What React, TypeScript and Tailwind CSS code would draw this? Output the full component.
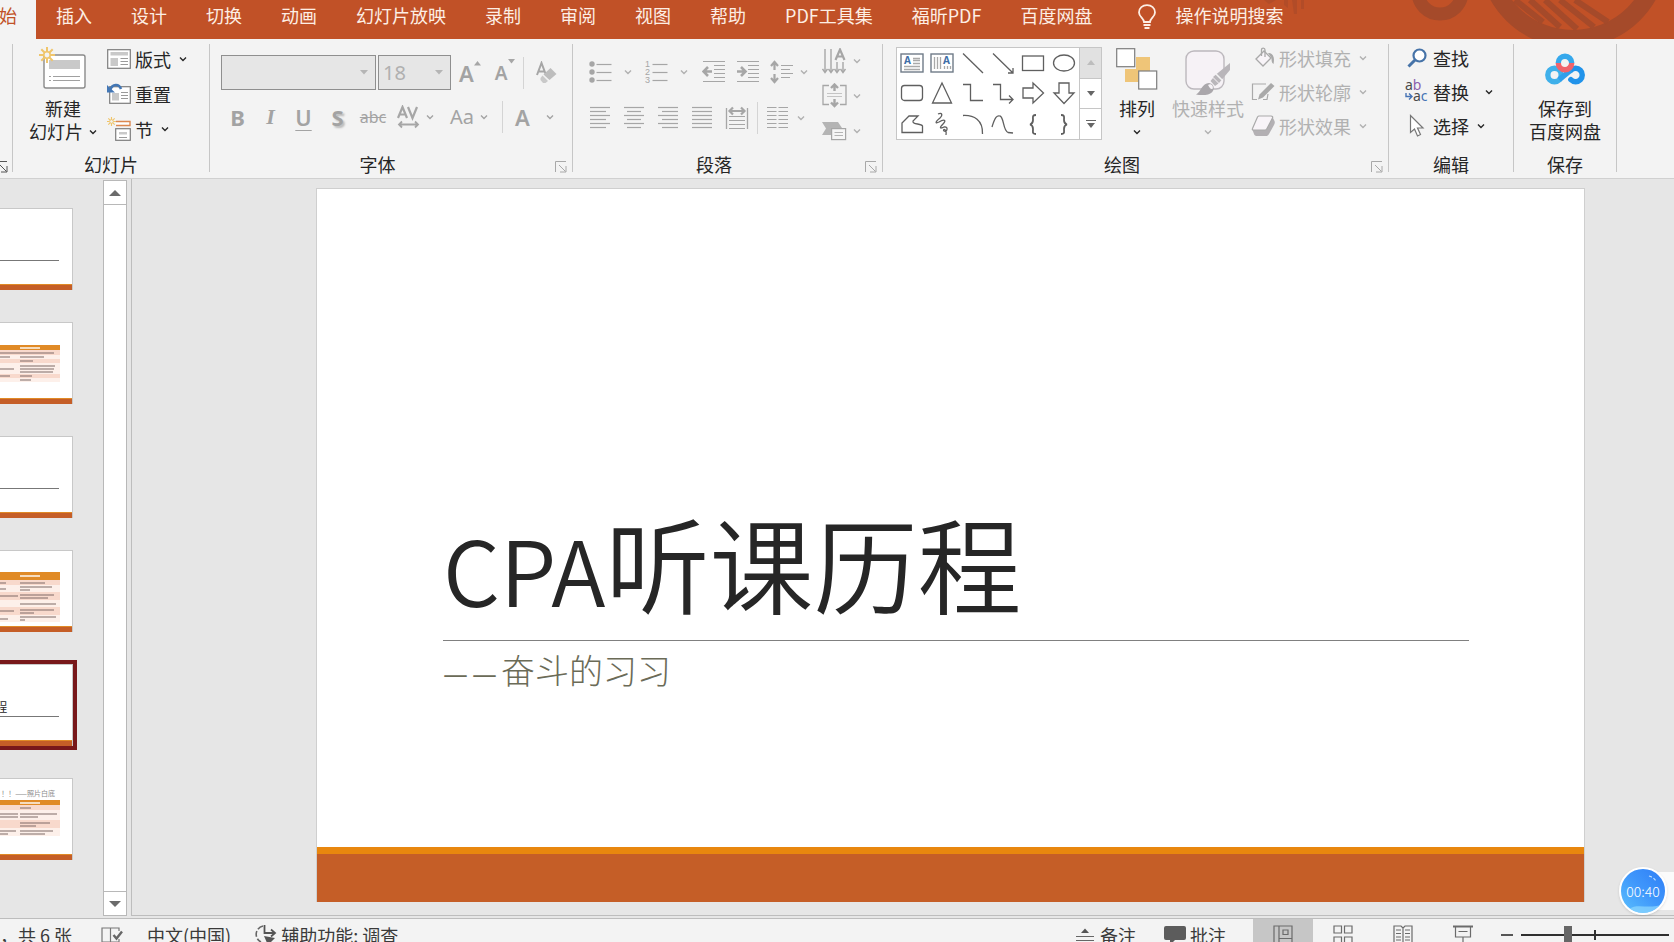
import type { ReactNode } from "react";
import clsx from "clsx";

const TABS = ["插入", "设计", "切换", "动画", "幻灯片放映", "录制", "审阅", "视图", "帮助", "PDF工具集", "福昕PDF", "百度网盘"];

type IconProps = { w: number; h: number; className?: string; children: ReactNode };

function Svg({ w, h, className, children }: IconProps) {
  return (
    <svg width={w} height={h} viewBox={`0 0 ${w} ${h}`} fill="none" aria-hidden="true" className={clsx("shrink-0", className)}>
      {children}
    </svg>
  );
}

function Chevron({ className }: { className?: string }) {
  return (
    <Svg w={8} h={6} className={className}>
      <path d="M1 1.5 L4 4.5 L7 1.5" stroke="currentColor" strokeWidth="1.4" />
    </Svg>
  );
}

function Divider({ className }: { className?: string }) {
  return <div className={clsx("w-px h-8 bg-[#d4d4d4] shrink-0", className)} />;
}

/* ---------- ribbon building blocks ---------- */

type GroupProps = { label: string; width: string; launcher?: boolean; children: ReactNode };

function Group({ label, width, launcher, children }: GroupProps) {
  return (
    <section aria-label={label} className={clsx("flex shrink-0", width)}>
      <div className="flex flex-col flex-1 min-w-0">
        <div className="flex h-[108px]">{children}</div>
        <div className="flex items-center h-[26px] pb-[3px]">
          <span className="flex-1 text-center">{label}</span>
          {launcher && (
            <button aria-label={`${label}设置`} className="w-[27px] pt-1.5 pl-2.5 text-[#a8a8a8]">
              <Launcher />
            </button>
          )}
        </div>
      </div>
      <div className="w-px h-32 bg-[#c6c6c6]" />
    </section>
  );
}

function Launcher() {
  return (
    <Svg w={12} h={12}>
      <path d="M0.5 11 V0.5 H11 M4 4 L10.5 10.5 M11 5 V11 H5" stroke="currentColor" />
    </Svg>
  );
}

type BigProps = { icon: ReactNode; lines: string[]; arrow?: "inline" | "below"; disabled?: boolean; className?: string };

function BigButton({ icon, lines, arrow, disabled, className }: BigProps) {
  return (
    <button disabled={disabled} className={clsx("flex flex-col items-center pt-0.5 shrink-0 leading-[23px] whitespace-nowrap", disabled && "text-[#b1b1b1]", className)}>
      <span className="flex items-center justify-center h-[46px] mb-[5px]">{icon}</span>
      {lines.map((line, i) => (
        <span key={line} className="flex items-center gap-1.5">
          {line}
          {arrow === "inline" && i === lines.length - 1 && <Chevron />}
        </span>
      ))}
      {arrow === "below" && <Chevron className="mt-[9px]" />}
    </button>
  );
}

type SmallProps = { icon: ReactNode; label: string; arrow?: string; disabled?: boolean; height: string };

function SmallButton({ icon, label, arrow, disabled, height }: SmallProps) {
  return (
    <button disabled={disabled} className={clsx("flex items-center whitespace-nowrap", height, disabled && "text-[#b1b1b1]")}>
      <span className="w-6 mr-1 flex justify-center">{icon}</span>
      {label}
      {arrow && <Chevron className={arrow} />}
    </button>
  );
}

/* ---------- slides group icons ---------- */

function Sun({ s = 1 }: { s?: number }) {
  return (
    <g transform={`scale(${s})`}>
      <path d="M8 0 V16 M0 8 H16 M2.3 2.3 L13.7 13.7 M13.7 2.3 L2.3 13.7" stroke="#efc56c" strokeWidth="2" />
      <circle cx="8" cy="8" r="3.2" fill="#f3f3f3" stroke="#efc56c" strokeWidth="1.6" />
    </g>
  );
}

function NewSlideIcon() {
  return (
    <Svg w={48} h={44}>
      <rect x="5" y="8" width="41" height="33" rx="2" fill="#fff" stroke="#8a8a8a" strokeWidth="1.4" />
      <rect x="10" y="13" width="31" height="9" fill="#c9c9c9" />
      <path d="M14 29.5 H41 M14 33.5 H41" stroke="#a0a0a0" />
      <path d="M10 29.5 H12 M10 33.5 H12" stroke="#a0a0a0" />
      <Sun />
    </Svg>
  );
}

function LayoutIcon() {
  return (
    <Svg w={24} h={20}>
      <rect x="0.7" y="0.7" width="22.6" height="18.6" fill="#fff" stroke="#7d7d7d" strokeWidth="1.2" />
      <rect x="3.5" y="3" width="17.5" height="3.5" fill="#c9c9c9" />
      <rect x="3.5" y="9" width="7.5" height="8" fill="#c9c9c9" />
      <path d="M13.5 9.5 H21 M13.5 12.5 H21 M13.5 15.5 H21" stroke="#9a9a9a" />
    </Svg>
  );
}

function ResetIcon() {
  return (
    <Svg w={24} h={22}>
      <rect x="2.7" y="3.7" width="20.6" height="16.6" fill="#fff" stroke="#7d7d7d" strokeWidth="1.2" />
      <rect x="5" y="10" width="7" height="7.5" fill="#c9c9c9" />
      <path d="M14 9.5 H21 M14 12.5 H21 M14 15.5 H21" stroke="#9a9a9a" />
      <path d="M14 6 C12 0.5 5.5 0.5 3 7" stroke="#4377b5" strokeWidth="2.6" />
      <path d="M0 2 V9.5 H8 Z" fill="#4377b5" />
    </Svg>
  );
}

function SectionIcon() {
  return (
    <Svg w={24} h={24}>
      <path d="M9 4.5 H23 V8.5 H9" stroke="#dc8850" strokeWidth="1.4" fill="#fff" />
      <rect x="8.7" y="11.7" width="14.6" height="11.6" fill="#fff" stroke="#7d7d7d" strokeWidth="1.2" />
      <rect x="12" y="15" width="8" height="2.5" fill="#c9c9c9" />
      <path d="M12 20.5 H20" stroke="#9a9a9a" />
      <Sun s={0.56} />
    </Svg>
  );
}

/* ---------- paragraph icons, all drawn on a 24px box ---------- */

const G = "#a6a6a6";

function Bullets() {
  return (
    <Svg w={24} h={24}>
      {[4, 12, 20].map((y) => (
        <g key={y}>
          <circle cx="3" cy={y} r="2.7" fill={G} />
          <path d={`M7.5 ${y + 0.5} H22.5`} stroke={G} strokeWidth="1.2" />
        </g>
      ))}
    </Svg>
  );
}

function Numbering() {
  return (
    <Svg w={24} h={24} className="overflow-visible">
      {[1, 2, 3].map((n) => (
        <g key={n}>
          <text x="0" y={n * 8 - 1} fontSize="9" fill={G} fontFamily="Liberation Sans">{n}</text>
          <path d={`M7.5 ${n * 8 - 3.5} H22.5`} stroke={G} strokeWidth="1.2" />
        </g>
      ))}
    </Svg>
  );
}

function Indent({ right }: { right?: boolean }) {
  return (
    <Svg w={24} h={24}>
      <path d="M1 1.5 H23 M12 5.5 H23 M12 9.5 H23 M12 13.5 H23 M12 17.5 H23 M1 21.5 H23" stroke={G} strokeWidth="1.2" />
      {right ? (
        <path d="M1 11.5 H8 M5 7 L9.5 11.5 L5 16" stroke={G} strokeWidth="2.6" />
      ) : (
        <path d="M10 11.5 H3 M6 7 L1.5 11.5 L6 16" stroke={G} strokeWidth="2.6" />
      )}
    </Svg>
  );
}

function LineSpacing() {
  return (
    <Svg w={24} h={24}>
      <path d="M4.5 2 V10 M1 6 L4.5 2 L8 6 M4.5 14 V22 M1 18 L4.5 22 L8 18" stroke={G} strokeWidth="2.2" />
      <path d="M11 5.5 H23 M11 9.5 H20 M11 13.5 H23 M11 17.5 H20" stroke={G} strokeWidth="1.2" />
    </Svg>
  );
}

function TextDirection() {
  return (
    <Svg w={25} h={26}>
      <path d="M3 1 V23 M9 1 V23 M15 14 V23 M21 14 V23" stroke={G} strokeWidth="1.4" />
      <path d="M0.5 21 L3 24.5 L5.5 21 M6.5 21 L9 24.5 L11.5 21 M12.5 21 L15 24.5 L17.5 21 M18.5 21 L21 24.5 L23.5 21" stroke={G} strokeWidth="1.4" />
      <path d="M13.5 12 L18 1.5 L22.5 12 M15 8.5 H21" stroke={G} strokeWidth="2.2" />
    </Svg>
  );
}

function AlignText() {
  return (
    <Svg w={25} h={25}>
      <path d="M7 2.5 H1 V21.5 H7 M18 2.5 H24 V21.5 H18" stroke={G} strokeWidth="1.3" />
      <path d="M5 10.5 H20 M5 13.5 H20" stroke="#c4c4c4" />
      <path d="M12.5 8 V1.5 M9 5 L12.5 1.5 L16 5 M12.5 16 V23 M9 19.5 L12.5 23 L16 19.5" stroke={G} strokeWidth="2.4" />
    </Svg>
  );
}

function SmartArt() {
  return (
    <Svg w={25} h={20}>
      <path d="M0 1 H16 L20 7 H9 V14 H0 L4 7.5 Z" fill="#b4b4b4" />
      <rect x="9.6" y="7.6" width="14" height="11" fill="#f6f6f6" stroke={G} strokeWidth="1.2" />
      <path d="M12.5 11.5 H21 M12.5 14.5 H21" stroke="#b4b4b4" />
    </Svg>
  );
}

const ALIGNMENTS = [
  { label: "左对齐", short: [1, 17] },
  { label: "居中", short: [4, 18] },
  { label: "右对齐", short: [5, 21] },
  { label: "两端对齐", short: [1, 21] },
];

function AlignIcon({ short }: { short: number[] }) {
  return (
    <Svg w={22} h={24}>
      {[1, 5, 9, 13, 17, 21].map((y, i) => (
        <path key={y} d={i % 2 ? `M${short[0]} ${y + 0.5} H${short[1]}` : `M1 ${y + 0.5} H21`} stroke={G} strokeWidth="1.2" />
      ))}
    </Svg>
  );
}

function Distribute() {
  return (
    <Svg w={24} h={24}>
      <path d="M1.5 2 V23 M22.5 2 V23" stroke={G} strokeWidth="1.3" />
      <path d="M4 10.5 H20 M4 14.5 H20 M4 18.5 H20 M4 22.5 H20" stroke={G} strokeWidth="1.2" />
      <path d="M5 5 H19 M8 1.5 L4.5 5 L8 8.5 M16 1.5 L19.5 5 L16 8.5" stroke={G} strokeWidth="2.2" />
    </Svg>
  );
}

function Columns() {
  return (
    <Svg w={23} h={24}>
      {[1, 5, 9, 13, 17, 21].map((y) => (
        <path key={y} d={`M1 ${y + 0.5} H10.5 M12.5 ${y + 0.5} H22`} stroke={G} strokeWidth="1.2" />
      ))}
    </Svg>
  );
}

/* ---------- drawing group ---------- */

const INK = "#5f5f5f";

const SHAPES: { name: string; art: ReactNode }[] = [
  {
    name: "文本框",
    art: (
      <>
        <rect x="1" y="3" width="22" height="18" stroke="#6f7b88" strokeWidth="1.4" />
        <text x="4" y="13" fontSize="10" fontWeight="700" fill="#3f6fa8" fontFamily="Noto Sans">A</text>
        <path d="M13 7.5 H20 M13 9.5 H20 M13 12.5 H20 M4 15.5 H20 M4 18.5 H20" stroke="#a9a9a9" />
      </>
    ),
  },
  {
    name: "竖排文本框",
    art: (
      <>
        <rect x="1" y="3" width="22" height="18" stroke="#6f7b88" strokeWidth="1.4" />
        <text x="13" y="13" fontSize="10" fontWeight="700" fill="#3f6fa8" fontFamily="Noto Sans">A</text>
        <path d="M4.5 6 V18 M7.5 6 V18 M10.5 6 V18 M14.5 15 V18 M17.5 15 V18 M20.5 15 V18" stroke="#a9a9a9" />
      </>
    ),
  },
  { name: "直线", art: <path d="M2 2.5 L22 22" /> },
  { name: "箭头", art: <path d="M2 2.5 L22 22 M22 17 V22 H17" /> },
  { name: "矩形", art: <rect x="1.5" y="5" width="21" height="14.5" /> },
  { name: "椭圆", art: <ellipse cx="12" cy="12" rx="10.5" ry="8" /> },
  { name: "圆角矩形", art: <rect x="1.5" y="4.5" width="21" height="15" rx="3" /> },
  { name: "三角形", art: <path d="M12 2 L21.5 22 H2.5 Z" /> },
  { name: "肘形连接符", art: <path d="M2 3.5 H9.5 V19.5 H22" /> },
  { name: "肘形箭头", art: <path d="M2 3.5 H9.5 V18.5 H22 M18 14.5 L22 18.5 L18 22.5" /> },
  { name: "右箭头", art: <path d="M2 7 H12 V2 L22.5 12 L12 22 V17 H2 Z" /> },
  { name: "下箭头", art: <path d="M7 2 V12 H2 L12 22.5 L22 12 H17 V2 Z" /> },
  { name: "任意多边形", art: <path d="M2 20.5 V11 L9 4 H18 L13 9 C12 13 21 11 22.5 14 V20.5 Z" /> },
  { name: "曲线", art: <path d="M8 2 C12 0 13 3 10 6 C5 10 5 12 9 10 C14 7 17 8 13 12 C9 16 10 17 14 15 C19 14 17 21 14 19 C12 17 17 16 16 23" /> },
  { name: "弧形", art: <path d="M2 3.5 C13 3 22 8 21.5 22" /> },
  { name: "波形", art: <path d="M1 15 C4 5 6 3 9 4 C13 5 12 19 17 20.5 L22 21" /> },
  { name: "左大括号", art: <path d="M15 3 C11 3 12 5 12 8 C12 11 11 12 9 12.5 C11 13 12 14 12 17 C12 20 11 22 15 22" strokeWidth="1.8" /> },
  { name: "右大括号", art: <path d="M9 3 C13 3 12 5 12 8 C12 11 13 12 15 12.5 C13 13 12 14 12 17 C12 20 13 22 9 22" strokeWidth="1.8" /> },
];

function ArrangeIcon() {
  return (
    <Svg w={42} h={42}>
      <rect x="20" y="9" width="14" height="14" fill="#efc578" />
      <rect x="9" y="21" width="14" height="13" fill="#efc578" />
      <rect x="0.7" y="0.7" width="18" height="18" fill="#fff" stroke="#7d7d7d" strokeWidth="1.2" />
      <rect x="22.7" y="23" width="18" height="18" fill="#fff" stroke="#7d7d7d" strokeWidth="1.2" />
    </Svg>
  );
}

function QuickStyleIcon() {
  return (
    <Svg w={46} h={46} className="mt-2">
      <rect x="1" y="1" width="38" height="38" rx="8" fill="#f6f2f6" stroke="#bcb8bd" strokeWidth="1.4" />
      <path d="M45 13 L45 20 L34 33 L28 27 Z" fill="#b9b6ba" />
      <path d="M31 24 L37 30" stroke="#f3f3f3" strokeWidth="1.6" />
      <path d="M28 28 L33.5 33.5 L30 36 L25.5 31 Z" fill="#b9b6ba" />
      <path d="M11 44.5 C16 42 17 33 24 33 C31 34 30 43 23 44.5 C19 45.5 14 45 11 44.5 Z" fill="#aaa7ab" />
      <path d="M23 35 C26 33 29 36 27.5 39 C25 39 25 38 23 35 Z" fill="#f6f2f6" />
    </Svg>
  );
}

function FillIcon() {
  return (
    <Svg w={24} h={22}>
      <path d="M5 12 L13 4 L20 11 L12 19 Z" fill="#f8f4f8" stroke="#a9a9a9" strokeWidth="1.3" />
      <path d="M10.5 9 V3 C10.5 0.5 14 0.5 14 3 V10" stroke="#a9a9a9" strokeWidth="1.3" />
      <path d="M17 6 C22 6 24 10 22.5 17 C20.5 16 20.5 13 20.5 11 Z" fill="#a9a9a9" />
    </Svg>
  );
}

function OutlineIcon() {
  return (
    <Svg w={24} h={20}>
      <path d="M15 2 H1.5 V17.5 H6 M12 17.5 H16 L17 12" stroke="#a9a9a9" strokeWidth="1.2" />
      <path d="M20 1 L23.5 4 L12 15.5 L7 17.5 L8.5 12.5 Z" fill="#a9a9a9" />
    </Svg>
  );
}

function EffectIcon() {
  return (
    <Svg w={24} h={22}>
      <path d="M1.5 15 L3 19 C3.5 20.5 4.5 21 6 21 H15 C16.5 21 17 20.5 18 19 L23 10 C24 8 24 7 23.5 6 L21.5 2 Z" fill="#b3b0b3" />
      <path d="M8 1 H20 C21.5 1 22 2 21.5 3 L16 13.5 C15.5 14.5 15 15 14 15 H2.5 C1.5 15 1 14.5 1.5 13.5 L6.5 2 C7 1.3 7.3 1 8 1 Z" fill="#f8f4f8" stroke="#a9a9a9" strokeWidth="1.2" />
    </Svg>
  );
}

function FindIcon() {
  return (
    <Svg w={20} h={20}>
      <circle cx="12.5" cy="7.5" r="6" fill="#fff" stroke="#4673a8" strokeWidth="2.2" />
      <path d="M8 12 L1.5 18.5" stroke="#4673a8" strokeWidth="3" />
    </Svg>
  );
}

function ReplaceIcon() {
  return (
    <Svg w={24} h={24} className="overflow-visible">
      <text x="0" y="10" fontSize="14" fontFamily="Noto Sans" fill="#4a4a4a">a<tspan fill="#8c5fae">b</tspan></text>
      <text x="8" y="21" fontSize="14" fontFamily="Noto Sans" fill="#4a4a4a">a<tspan fill="#4673b5">c</tspan></text>
      <path d="M1 13 V16.5 H6.5 M4 13.5 L7 16.5 L4 19.5" stroke="#4673b5" strokeWidth="1.4" />
    </Svg>
  );
}

function CursorIcon() {
  return (
    <Svg w={16} h={24}>
      <path d="M1.5 1.5 V18.5 L5.5 15 L8.5 22 L11.5 20.5 L8.5 14 H14 Z" fill="#fff" stroke="#777" strokeWidth="1.2" />
    </Svg>
  );
}

function NetdiskIcon() {
  return (
    <Svg w={40} h={32}>
      <circle cx="9.5" cy="22" r="6.7" stroke="#3fb0ea" strokeWidth="5.4" />
      <path d="M25.8 26.7 A6.7 6.7 0 1 0 25.8 17.3" stroke="#2193ea" strokeWidth="5.4" strokeLinecap="round" />
      <path d="M14.2 26.7 L26 17" stroke="#2f9fec" strokeWidth="5.4" />
      <path d="M13.3 10 A6.7 6.7 0 1 1 26.7 10" stroke="#35a8ec" strokeWidth="5.4" />
      <path d="M13.3 10 A6.7 6.7 0 0 0 26.7 10" stroke="#f0636c" strokeWidth="5.4" />
    </Svg>
  );
}

/* ---------- title bar ---------- */

function BarArt() {
  return (
    <svg width="410" height="39" viewBox="0 0 410 39" fill="none" aria-hidden="true" className="absolute right-0 top-0">
      <path d="M0 0 H12 L5 4 Z M20 0 H24 V8 L20 5 Z M28 0 H33 V14 H30 Z M37 0 H40 V9 H37 Z" fill="#a94a2a" opacity="0.6" />
      <circle cx="176" cy="-8" r="22" stroke="#a54a2a" strokeWidth="13" />
      <circle cx="309" cy="-47" r="86" stroke="#a54a2a" strokeWidth="18" />
      <path d="M251 0 L279 22 M266 0 L296 27 M281 0 L313 29 M296 0 L330 27 M311 0 L344 22" stroke="#a54a2a" strokeWidth="6" />
    </svg>
  );
}

function TabBar() {
  return (
    <nav className="relative flex h-[39px] shrink-0 bg-[#c15127] text-[#fdeee4] whitespace-nowrap overflow-hidden">
      <BarArt />
      <button className="flex justify-end w-9 pr-[19px] pt-[3px] overflow-hidden bg-[#f3f3f3] text-[#c15127] leading-6">开始</button>
      <div className="relative flex gap-[39px] ml-5 h-[30px]">
        {TABS.map((tab) => (
          <button key={tab}>{tab}</button>
        ))}
      </div>
      <button className="relative flex items-center gap-[18px] h-[30px] ml-[45px]">
        <Svg w={20} h={26} className="mt-1">
          <path d="M7 18 C7 14 2 13 2 8.5 C2 4 5.5 1.2 10 1.2 C14.5 1.2 18 4 18 8.5 C18 13 13 14 13 18 Z" stroke="currentColor" strokeWidth="1.8" />
          <path d="M6.5 21 H13.5 M7.5 24 H12.5" stroke="currentColor" strokeWidth="1.8" />
        </Svg>
        操作说明搜索
      </button>
    </nav>
  );
}

/* ---------- ribbon ---------- */

function ComboArrow() {
  return (
    <Svg w={8} h={5} className="absolute right-2 top-[15px]">
      <path d="M0 0 H8 L4 4.5 Z" fill="#b5b5b5" />
    </Svg>
  );
}

function FontGroup() {
  const combo = "appearance-none w-full h-[35px] border border-[#8f8f8f] bg-[#e6e6e6] text-[#b0b0b0] pl-1 text-xl leading-8";
  return (
    <Group label="字体" width="w-[363px]" launcher>
      <div className="pl-[11px] pt-[11px] text-[#a3a3a3] font-['Noto_Sans','Noto_Sans_CJK_SC',sans-serif]">
        <div className="flex items-center">
          <label className="relative w-[155px] mr-0.5">
            <select aria-label="字体" disabled className={combo} />
            <ComboArrow />
          </label>
          <label className="relative w-[73px]">
            <select aria-label="字号" disabled className={combo}>
              <option>18</option>
            </select>
            <ComboArrow />
          </label>
          <button aria-label="增大字号" className="flex items-start ml-2 text-[22px] leading-6 font-semibold">
            A<Svg w={7} h={5}><path d="M0 4.5 H7 L3.5 0 Z" fill={G} /></Svg>
          </button>
          <button aria-label="减小字号" className="flex items-start ml-3.5 text-[19px] leading-7 font-semibold">
            A<Svg w={7} h={5}><path d="M0 0 H7 L3.5 4.5 Z" fill={G} /></Svg>
          </button>
          <Divider className="ml-2" />
          <button aria-label="清除格式" className="ml-3">
            <Svg w={22} h={24}>
              <path d="M1 14 L5.5 2 L10 14 M2.5 10.5 H8.5" stroke={G} strokeWidth="2" />
              <path d="M14 8 L20 14 L13 20 L7 14.5 Z" transform="translate(0.5 -1)" fill="#bdbdbd" />
              <path d="M6.5 14.5 L12 20 L9.5 22 H7 L4.5 19 V17 Z" fill="#c9c9c9" />
            </Svg>
          </button>
        </div>
        <div className="flex items-center h-8 mt-[11px] text-[22px] leading-8">
          <button className="w-[33px] font-bold">B</button>
          <button className="w-[33px] font-semibold italic font-['Liberation_Serif',serif]">I</button>
          <button className="w-[33px] font-semibold underline underline-offset-4 decoration-1">U</button>
          <button className="w-[35px] font-bold [text-shadow:2px_2px_2px_#bbb]">S</button>
          <button className="w-9 text-base line-through">abc</button>
          <button aria-label="字符间距" className="flex items-center gap-1.5 ml-1.5">
            <Svg w={23} h={24}>
              <path d="M1 13 L5.5 2 L10 13 M2.8 9.5 H8.3 M11 2 L15.5 13 L20 2" stroke={G} strokeWidth="2.2" />
              <path d="M2 19.5 H21 M5 16.5 L2 19.5 L5 22.5 M18 16.5 L21 19.5 L18 22.5" stroke={G} strokeWidth="1.8" />
            </Svg>
            <Chevron />
          </button>
          <button className="flex items-center gap-1.5 ml-4 text-xl">Aa<Chevron /></button>
          <Divider className="ml-3.5" />
          <button className="flex items-center gap-4 ml-3 font-semibold">A<Chevron /></button>
        </div>
      </div>
    </Group>
  );
}

function ParagraphGroup() {
  return (
    <Group label="段落" width="w-[310px]" launcher>
      <div className="w-[249px] pl-4 pt-4 text-[#b0b0b0]">
        <div className="flex items-center h-6">
          <button aria-label="项目符号" className="flex items-center gap-[11px]"><Bullets /><Chevron /></button>
          <button aria-label="编号" className="flex items-center gap-[11px] ml-[13px]"><Numbering /><Chevron /></button>
          <button aria-label="减少缩进" className="ml-3.5"><Indent /></button>
          <button aria-label="增加缩进" className="ml-2.5"><Indent right /></button>
          <button aria-label="行距" className="flex items-center gap-1.5 ml-2.5"><LineSpacing /><Chevron /></button>
        </div>
        <div className="flex items-center h-6 mt-[22px]">
          {ALIGNMENTS.map((a) => (
            <button key={a.label} aria-label={a.label} className="mr-3"><AlignIcon short={a.short} /></button>
          ))}
          <button aria-label="分散对齐"><Distribute /></button>
          <Divider className="ml-2" />
          <button aria-label="分栏" className="flex items-center gap-2 ml-2"><Columns /><Chevron /></button>
        </div>
      </div>
      <div className="flex flex-col -mt-px text-[#b0b0b0]">
        <button aria-label="文字方向" className="flex items-center gap-1.5 h-[35px]"><TextDirection /><Chevron /></button>
        <button aria-label="对齐文本" className="flex items-center gap-1.5 h-[35px]"><AlignText /><Chevron /></button>
        <button aria-label="转换为 SmartArt" className="flex items-center gap-1.5 h-[35px]"><SmartArt /><Chevron /></button>
      </div>
    </Group>
  );
}

function ShapeGallery() {
  return (
    <div className="flex w-[206px] h-[93px] mt-[3px] ml-[13px] border border-[#c6c6c6] bg-white shrink-0">
      <div className="grid grid-cols-6 grid-rows-3 flex-1">
        {SHAPES.map((s) => (
          <button key={s.name} aria-label={s.name} className="flex items-center justify-center">
            <svg width="24" height="24" viewBox="0 0 24 24" fill="none" stroke={INK} strokeWidth="1.3" className="[&_text]:stroke-none">{s.art}</svg>
          </button>
        ))}
      </div>
      <div className="flex flex-col w-[22px] border-l border-[#c6c6c6]">
        <button aria-label="向上" className="flex items-center justify-center flex-1 bg-[#e1e1e1]">
          <Svg w={8} h={5}><path d="M0 5 H8 L4 0 Z" fill="#bdbdbd" /></Svg>
        </button>
        <button aria-label="向下" className="flex items-center justify-center flex-1 border-y border-[#c6c6c6]">
          <Svg w={8} h={5}><path d="M0 0 H8 L4 5 Z" fill="#666" /></Svg>
        </button>
        <button aria-label="其他" className="flex items-center justify-center flex-1">
          <Svg w={10} h={10}><path d="M0 1.5 H10" stroke="#666" /><path d="M1 4 H9 L5 9 Z" fill="#666" /></Svg>
        </button>
      </div>
    </div>
  );
}

function Ribbon() {
  return (
    <div className="flex shrink-0 pt-[5px] bg-[#f3f3f3] border-b border-[#d0d0d0] overflow-hidden">
      <div className="flex w-[13px] shrink-0">
        <button aria-label="剪贴板设置" className="flex justify-end w-3 pt-[117px] pr-1 text-[#555]"><Launcher /></button>
        <div className="w-px h-32 bg-[#c6c6c6]" />
      </div>

      <Group label="幻灯片" width="w-[197px]">
        <BigButton className="ml-4 mr-2.5" icon={<NewSlideIcon />} lines={["新建", "幻灯片"]} arrow="inline" />
        <div className="flex flex-col -mt-[3px]">
          <SmallButton height="h-[35px]" icon={<LayoutIcon />} label="版式" arrow="ml-2" />
          <SmallButton height="h-[35px]" icon={<ResetIcon />} label="重置" />
          <SmallButton height="h-[35px]" icon={<SectionIcon />} label="节" arrow="ml-2" />
        </div>
      </Group>

      <FontGroup />
      <ParagraphGroup />

      <Group label="绘图" width="w-[506px]" launcher>
        <ShapeGallery />
        <BigButton className="mx-3.5" icon={<ArrangeIcon />} lines={["排列"]} arrow="below" />
        <BigButton className="mr-[7px]" icon={<QuickStyleIcon />} lines={["快速样式"]} arrow="below" disabled />
        <div className="flex flex-col -mt-[3px]">
          <SmallButton height="h-[34px]" icon={<FillIcon />} label="形状填充" arrow="ml-2" disabled />
          <SmallButton height="h-[34px]" icon={<OutlineIcon />} label="形状轮廓" arrow="ml-2" disabled />
          <SmallButton height="h-[34px]" icon={<EffectIcon />} label="形状效果" arrow="ml-2" disabled />
        </div>
      </Group>

      <Group label="编辑" width="w-[125px]">
        <div className="flex flex-col pl-4 -mt-[3px]">
          <SmallButton height="h-[34px]" icon={<FindIcon />} label="查找" />
          <SmallButton height="h-[34px]" icon={<ReplaceIcon />} label="替换" arrow="ml-4" />
          <SmallButton height="h-[34px]" icon={<CursorIcon />} label="选择" arrow="ml-2" />
        </div>
      </Group>

      <Group label="保存" width="w-[103px]">
        <BigButton className="flex-1" icon={<NetdiskIcon />} lines={["保存到", "百度网盘"]} />
      </Group>
    </div>
  );
}

/* ---------- thumbnails ---------- */

type Row = { h: string; shade?: boolean; left: number[]; right: number[] };
type Thumb = { id: number; kind: "line" | "table" | "title"; caption?: string; head?: string; rows?: Row[] };

const THUMBS: Thumb[] = [
  { id: 1, kind: "line" },
  {
    id: 2, kind: "table", head: "mt-[22px] h-[5px]",
    rows: [
      { h: "h-[5px]", shade: true, left: [40], right: [34] },
      { h: "h-1", left: [10], right: [24] },
      { h: "h-1", shade: true, left: [], right: [13] },
      { h: "h-[11px]", left: [14], right: [35, 34, 33] },
      { h: "h-1", shade: true, left: [10], right: [12] },
      { h: "h-1", left: [], right: [11] },
    ],
  },
  { id: 3, kind: "line" },
  {
    id: 4, kind: "table", head: "mt-[21px] h-2",
    rows: [
      { h: "h-[5px]", shade: true, left: [6], right: [25] },
      { h: "h-[7px]", left: [6], right: [32, 10] },
      { h: "h-2", shade: true, left: [18], right: [34, 28] },
      { h: "h-[7px]", left: [], right: [36] },
      { h: "h-2", shade: true, left: [14], right: [34, 14] },
      { h: "h-[7px]", left: [8], right: [36, 5] },
    ],
  },
  { id: 5, kind: "title" },
  {
    id: 6, kind: "table", caption: "！！——照片白底", head: "h-[5px]",
    rows: [
      { h: "h-[5px]", shade: true, left: [], right: [11] },
      { h: "h-2.5", left: [18, 18], right: [37, 18] },
      { h: "h-2", shade: true, left: [], right: [30, 16] },
      { h: "h-2", left: [16, 8], right: [33, 25] },
    ],
  },
];

function TextBars({ widths }: { widths: number[] }) {
  return (
    <div className="flex flex-col justify-center gap-px h-full">
      {widths.map((w, i) => (
        <div key={i} className="h-0.5 bg-[#7d6a66]/50" style={{ width: w }} />
      ))}
    </div>
  );
}

function ThumbView({ thumb }: { thumb: Thumb }) {
  return (
    <button
      aria-label={`幻灯片 ${thumb.id}`}
      className={clsx(
        "flex flex-col w-[146px] h-[82px] -ml-[73px] bg-white text-left shrink-0 border-t border-r border-[#c8c8c8]",
        thumb.kind === "title" && "outline-4 outline-[#78181a]"
      )}
    >
      {thumb.kind === "line" && <div className="w-[118px] ml-3.5 h-[52px] border-b border-[#777]" />}
      {thumb.kind === "title" && (
        <div className="flex items-end w-[118px] ml-3.5 h-[52px] border-b border-[#777] text-xs leading-4 whitespace-nowrap text-[#262626]">
          <span><span className="text-[10px]">CPA</span>听课历程</span>
        </div>
      )}
      {thumb.caption && <div className="w-[128px] h-[21px] pt-2.5 text-right text-[7px] leading-[9px] text-[#8a8a8a] whitespace-nowrap">{thumb.caption}</div>}
      {thumb.rows && (
        <div className="w-[119px] ml-3.5">
          <div className={clsx("flex items-center bg-[#e08a26]", thumb.head)}>
            <div className="w-[79px]" />
            <div className="w-5 h-0.5 bg-white/70" />
          </div>
          {thumb.rows.map((row, i) => (
            <div key={i} className={clsx("flex", row.h, row.shade ? "bg-[#f8d9cc]" : "bg-[#fdf0ea]")}>
              <div className="w-[79px] pl-[59px] overflow-hidden"><TextBars widths={row.left} /></div>
              <div className="flex-1"><TextBars widths={row.right} /></div>
            </div>
          ))}
        </div>
      )}
      <div className="w-full h-1.5 mt-auto bg-[#c55e27] border-t border-[#e08a26]" />
    </button>
  );
}

/* ---------- status bar ---------- */

function StatusBar() {
  return (
    <footer className="h-[23px] shrink-0 overflow-hidden bg-[#f3f3f3] text-[#3a3a3a]">
      <div className="flex items-center h-8 whitespace-nowrap">
        <span className="w-[74px]">，共 6 张</span>
        <button aria-label="拼写检查" className="ml-[27px]">
          <Svg w={22} h={18}>
            <path d="M9.5 2 H1 V16 H9.5 M9.5 2 V17 M9.5 2 H18 V5 M9.5 16 H18 V13" stroke="#777" strokeWidth="1.2" />
            <path d="M12.5 9 L15.5 12.5 L21 5.5" stroke="#666" strokeWidth="2.4" />
          </Svg>
        </button>
        <button className="ml-6">中文(中国)</button>
        <button className="flex items-center gap-1 ml-6">
          <Svg w={22} h={22}>
            <path d="M8 2 A8.5 8.5 0 0 0 6 18" stroke="#666" strokeWidth="1.6" strokeDasharray="6 2" />
            <path d="M9.5 1 V9 H19 M16 5.5 L20 9 L16 12.5" stroke="#555" strokeWidth="1.8" />
            <path d="M9 12 L20 14 L13 21 Z" fill="#555" />
          </Svg>
          辅助功能: 调查
        </button>
        <div className="flex-1" />
        <button className="flex items-center gap-1.5 mr-7">
          <Svg w={18} h={14}>
            <path d="M0 8.5 H18 M0 12.5 H18" stroke="#666" strokeWidth="1.2" />
            <path d="M5 5 H13 L9 0.5 Z" fill="#555" />
          </Svg>
          备注
        </button>
        <button className="flex items-center gap-1 mr-[27px]">
          <Svg w={22} h={20}>
            <path d="M2 1 H20 Q22 1 22 3 V13 Q22 15 20 15 H11 L6 20 V15 H2 Q0 15 0 13 V3 Q0 1 2 1 Z" fill="#5c5c5c" />
          </Svg>
          批注
        </button>
        <button aria-label="普通视图" className="flex items-center justify-center w-[60px] h-8 bg-[#c6c6c6]">
          <Svg w={20} h={20}>
            <path d="M1 1 H19 V19 H1 Z M6 1 V19 M6 13.5 H19 M10 5 H15 V9.5 H10 Z" stroke="#6b6b6b" strokeWidth="1.2" />
          </Svg>
        </button>
        <button aria-label="幻灯片浏览" className="flex justify-center w-[60px]">
          <Svg w={20} h={20}>
            <path d="M1 1 H8.5 V8 H1 Z M11.5 1 H19 V8 H11.5 Z M1 12 H8.5 V19 H1 Z M11.5 12 H19 V19 H11.5 Z" stroke="#6b6b6b" strokeWidth="1.2" />
          </Svg>
        </button>
        <button aria-label="阅读视图" className="flex justify-center w-[60px]">
          <Svg w={20} h={20}>
            <path d="M10 3 L8 1 H1 V18 H8 L10 19.5 L12 18 H19 V1 H12 L10 3 V19" stroke="#6b6b6b" strokeWidth="1.2" />
            <path d="M3 5 H8 M3 8.5 H8 M3 12 H8 M3 15 H8 M12 5 H17 M12 8.5 H17 M12 12 H17 M12 15 H17" stroke="#6b6b6b" strokeWidth="1.2" />
          </Svg>
        </button>
        <button aria-label="幻灯片放映" className="flex justify-center w-[60px]">
          <Svg w={20} h={20}>
            <path d="M0 1.5 H20" stroke="#6b6b6b" strokeWidth="2" />
            <path d="M2.5 2 V12 H17.5 V2 M5.5 6.5 H14.5 M10 12 V20" stroke="#6b6b6b" strokeWidth="1.2" />
          </Svg>
        </button>
        <button aria-label="缩小" className="ml-2 mr-2"><div className="w-3 h-0.5 bg-[#555]" /></button>
        <label className="relative flex items-center w-[148px] mr-[5px]">
          <div className="absolute left-[73px] w-0.5 h-2.5 bg-[#333]" />
          <input
            type="range"
            aria-label="缩放"
            defaultValue={31}
            className="relative appearance-none w-full h-0.5 bg-[#2f2f2f] [&::-webkit-slider-thumb]:appearance-none [&::-webkit-slider-thumb]:w-2 [&::-webkit-slider-thumb]:h-[18px] [&::-webkit-slider-thumb]:bg-[#666]"
          />
        </label>
      </div>
    </footer>
  );
}

/* ---------- floating recorder timer ---------- */

function Timer() {
  return (
    <div className="absolute right-0 bottom-[26px] flex items-center justify-end w-14 h-[50px]">
      <div className="w-8 h-[38px] bg-[#fbfbfb]" />
      <div className="absolute right-[7px] flex items-center justify-center size-12 rounded-full border-2 border-white bg-linear-to-tr from-[#5cc0fd] via-[#4098fb] to-[#2f7df6] text-white text-sm font-light overflow-hidden shadow">
        <svg width="44" height="44" viewBox="0 0 44 44" fill="none" aria-hidden="true" className="absolute">
          <path d="M8 40 C16 34 26 40 40 36 V44 H8 Z" fill="#8fd8ff" opacity="0.7" />
          <path d="M28 7 C31 8 33 9 35 12" stroke="#bfe0ff" strokeWidth="1.2" strokeDasharray="3 2" />
        </svg>
        <span className="relative">00:40</span>
      </div>
    </div>
  );
}

export default function App() {
  return (
    <div className="relative flex flex-col h-screen overflow-hidden bg-[#e6e6e6] text-lg leading-6 text-[#262626] font-['Noto_Sans_CJK_SC',sans-serif]">
      <TabBar />
      <Ribbon />

      <main className="flex flex-1 min-h-0 border-b border-[#bdbdbd]">
        <aside className="flex flex-col gap-8 w-[103px] pt-[29px] overflow-hidden">
          {THUMBS.map((t) => (
            <ThumbView key={t.id} thumb={t} />
          ))}
        </aside>
        <div className="flex flex-col w-6 mt-px mb-0.5 mr-1 border border-[#b8b8b8] bg-white">
          <button aria-label="向上滚动" className="flex items-center justify-center h-6 border-b border-[#b8b8b8]">
            <Svg w={12} h={6}><path d="M0 6 H12 L6 0 Z" fill="#6b6b6b" /></Svg>
          </button>
          <div className="flex-1" />
          <button aria-label="向下滚动" className="flex items-center justify-center h-6 border-t border-[#b8b8b8]">
            <Svg w={12} h={6}><path d="M0 0 H12 L6 6 Z" fill="#6b6b6b" /></Svg>
          </button>
        </div>

        <div className="flex-1 min-w-0 mb-0.5 pl-[184px] pr-[89px] pt-[9px] border-l border-b border-[#bdbdbd]">
          <article className="flex flex-col w-full aspect-video bg-white border-t border-x border-[#cfcfcf]">
            <div className="flex items-end h-[452px] ml-[126px] mr-[115px] border-b border-[#808080]">
              <h1 className="text-[104px] leading-[144px] font-[350] whitespace-nowrap">
                <span className="text-[90px]">CPA</span>听课历程
              </h1>
            </div>
            <p className="ml-[126px] pt-1.5 text-[34px] leading-[46px] font-light text-[#6b6b57] whitespace-nowrap">
              <span className="text-[28px] font-normal mr-1">—</span>
              <span className="text-[28px] font-normal mr-1">—</span>奋斗的习习
            </p>
            <div className="mt-auto h-[7px] bg-[#e8870e]" />
            <div className="h-12 bg-[#c55e27]" />
          </article>
        </div>
      </main>

      <StatusBar />
      <Timer />
    </div>
  );
}
